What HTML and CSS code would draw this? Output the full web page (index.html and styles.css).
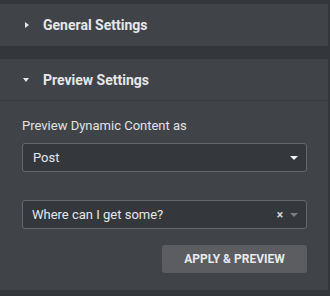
FILE: index.html
```html
<!DOCTYPE html>
<html>
<head>
<meta charset="utf-8">
<link rel="stylesheet" href="styles.css">
</head>
<body>
<div class="panel">
  <div class="section-head">
    <span class="caret-right"></span>
    <span class="title">General Settings</span>
  </div>
  <div class="gap"></div>
  <div class="section">
    <div class="section-head open">
      <span class="caret-down"></span>
      <span class="title">Preview Settings</span>
    </div>
    <div class="content">
      <div class="label">Preview Dynamic Content as</div>
      <div class="select">
        <span class="value">Post</span>
        <span class="arrow"></span>
      </div>
      <div class="select second">
        <span class="value">Where can I get some?</span>
        <span class="clear">×</span>
        <span class="arrow dim"></span>
      </div>
      <div class="actions">
        <button class="btn">Apply &amp; Preview</button>
      </div>
    </div>
  </div>
</div>
</body>
</html>
```

FILE: styles.css
```css
html, body {
  margin: 0;
  padding: 0;
  background: #33363b;
  width: 330px;
  height: 296px;
  overflow: hidden;
  font-family: Roboto, "Liberation Sans", sans-serif;
}
.panel {
  margin-top: 4px;
  margin-right: 2px;
  display: flex;
  flex-direction: column;
}
.section-head {
  height: 42px;
  background: #404348;
  display: flex;
  align-items: center;
  padding-left: 25px;
  box-sizing: border-box;
}
.section-head.open {
  height: 42px;
  border-bottom: 1px solid #36393e;
  padding-left: 23px;
}
.title {
  color: #e6e7e9;
  font-weight: 700;
  font-size: 14px;
  margin-left: 14px;
}
.caret-right {
  width: 0;
  height: 0;
  border-top: 3.5px solid transparent;
  border-bottom: 3.5px solid transparent;
  border-left: 4px solid #e6e7e9;
}
.caret-down {
  width: 0;
  height: 0;
  border-left: 3.5px solid transparent;
  border-right: 3.5px solid transparent;
  border-top: 4px solid #e6e7e9;
}
.gap {
  height: 13px;
}
.section {
  background: #404348;
}
.content {
  height: 189px;
  padding: 17px 21px 0 22px;
  box-sizing: border-box;
}
.label {
  color: #e2e3e5;
  font-size: 13px;
  line-height: 16px;
}
.select {
  margin-top: 9px;
  height: 29px;
  box-sizing: border-box;
  border: 1px solid #65676b;
  border-radius: 3px;
  background: #34373c;
  display: flex;
  align-items: center;
  padding: 0 8px 0 10px;
}
.select.second {
  margin-top: 28px;
  padding-left: 9px;
}
.value {
  flex: 1;
  color: #e6e7e9;
  font-size: 13px;
}
.arrow {
  width: 0;
  height: 0;
  border-left: 4px solid transparent;
  border-right: 4px solid transparent;
  border-top: 4px solid #f0f1f2;
}
.arrow.dim {
  border-top-color: #7c7e82;
}
.clear {
  color: #d8d9db;
  font-size: 12px;
  font-weight: 700;
  margin-right: 7px;
}
.actions {
  display: flex;
  justify-content: flex-end;
  margin-top: 16px;
}
.btn {
  width: 145px;
  height: 28px;
  border: 0;
  border-radius: 3px;
  background: #5c5d60;
  color: #e8e9eb;
  font-family: Roboto, "Liberation Sans", sans-serif;
  font-weight: 700;
  font-size: 12px;
  text-transform: uppercase;
  padding: 0;
}
```
